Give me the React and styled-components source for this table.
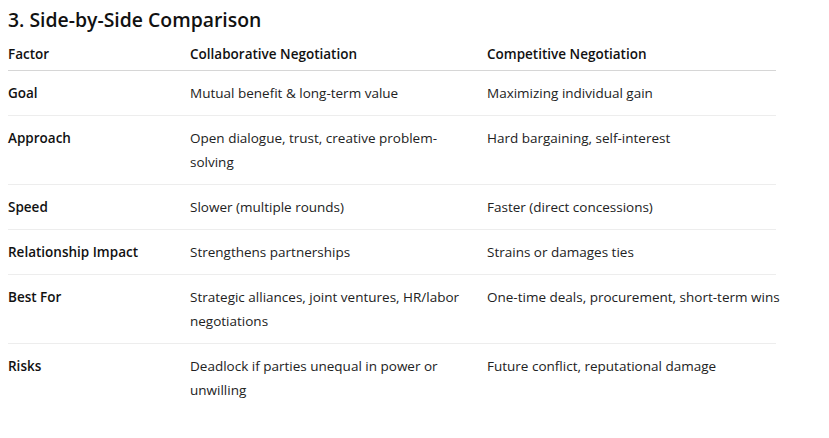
import { createGlobalStyle, styled } from 'styled-components';

const rows = [
  ['Goal', 'Mutual benefit & long-term value', 'Maximizing individual gain'],
  ['Approach', 'Open dialogue, trust, creative problem-solving', 'Hard bargaining, self-interest'],
  ['Speed', 'Slower (multiple rounds)', 'Faster (direct concessions)'],
  ['Relationship Impact', 'Strengthens partnerships', 'Strains or damages ties'],
  ['Best For', 'Strategic alliances, joint ventures, HR/labor negotiations', 'One-time deals, procurement, short-term wins'],
  ['Risks', 'Deadlock if parties unequal in power or unwilling', 'Future conflict, reputational damage'],
];

const App = () => {
  return (
    <>
      <GlobalStyle />
      <Page>
        <Heading>3. Side-by-Side Comparison</Heading>
        <Table>
          <HeadRow>
            <HeadCell>Factor</HeadCell>
            <HeadCell>Collaborative Negotiation</HeadCell>
            <HeadCell>Competitive Negotiation</HeadCell>
          </HeadRow>
          {rows.map(([factor, collab, comp], i) => (
            <Row key={factor} $last={i === rows.length - 1}>
              <Label>{factor}</Label>
              <Cell>{collab}</Cell>
              <Cell $end>{comp}</Cell>
            </Row>
          ))}
        </Table>
      </Page>
    </>
  );
};

const GlobalStyle = createGlobalStyle`
  body {
    margin: 0;
    background: #ffffff;
    font-family: "Open Sans", "Noto Sans", sans-serif;
    color: #1f1f1f;
  }
`;

const Page = styled.div`
  padding: 6px 8px;
`;

const Heading = styled.h3`
  margin: 0 0 8px;
  font-size: 19.4px;
  line-height: 28px;
  font-weight: 600;
  color: #111;
`;

const Table = styled.div`
  width: 768px;
  font-size: 13.5px;
  line-height: 24px;
`;

const Grid = styled.div`
  display: grid;
  grid-template-columns: 182px 297px 1fr;
`;

const HeadRow = styled(Grid)`
  padding-bottom: 4px;
  border-bottom: 1px solid #d6d6d6;
`;

const Row = styled(Grid)`
  padding: 10px 0;
  border-bottom: ${(p) => (p.$last ? 'none' : '1px solid #ededed')};
`;

const HeadCell = styled.div`
  font-weight: 600;
  color: #111;
`;

const Label = styled.div`
  font-weight: 600;
  color: #111;
  padding-right: 16px;
`;

const Cell = styled.div`
  padding-right: ${(p) => (p.$end ? '0' : '14px')};
  margin-right: ${(p) => (p.$end ? '-8px' : '0')};
  color: #222;
`;

export default App;
